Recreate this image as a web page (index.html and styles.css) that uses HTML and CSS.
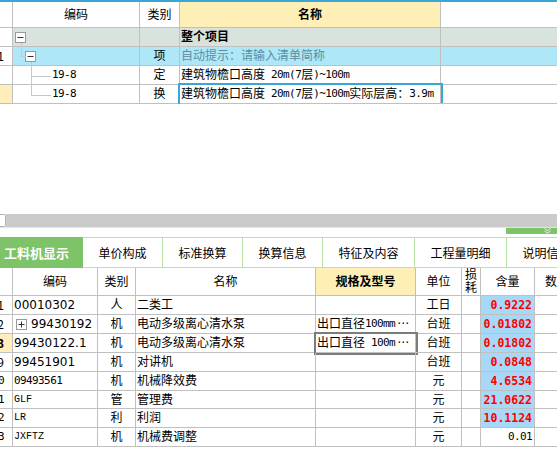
FILE: index.html
```html
<!DOCTYPE html>
<html lang="zh-CN">
<head>
<meta charset="utf-8">
<title>工料机显示</title>
<link rel="stylesheet" href="styles.css">
</head>
<body>
<div class="app">
  <div class="topline"></div>

  <div class="grid top">
    <div class="row head">
      <div class="c n"></div>
      <div class="c ctr">编码</div>
      <div class="c ctr">类别</div>
      <div class="c ctr hl b">名称</div>
      <div class="c last"></div>
    </div>
    <div class="row gray">
      <div class="c n wh"></div>
      <div class="c tree t1"><svg class="box" width="11" height="11" viewBox="0 0 11 11"><rect x=".5" y=".5" width="10" height="10" fill="#fff" stroke="#9a9a9a"/><path d="M2.5 5.5h6" stroke="#333"/></svg></div>
      <div class="c ctr"></div>
      <div class="c b">整个项目</div>
      <div class="c last"></div>
    </div>
    <div class="row blue">
      <div class="c n wh">1</div>
      <div class="c tree t2"><svg class="box" width="11" height="11" viewBox="0 0 11 11"><rect x=".5" y=".5" width="10" height="10" fill="#fff" stroke="#9a9a9a"/><path d="M2.5 5.5h6" stroke="#333"/></svg></div>
      <div class="c ctr">项</div>
      <div class="c hint">自动提示：请输入清单简称</div>
      <div class="c last"></div>
    </div>
    <div class="row">
      <div class="c n"></div>
      <div class="c tree t3"><span class="sm">19-8</span></div>
      <div class="c ctr">定</div>
      <div class="c">建筑物檐口高度<span class="sm"> 20m(7</span>层<span class="sm">)~100m</span></div>
      <div class="c last"></div>
    </div>
    <div class="row">
      <div class="c n cur"></div>
      <div class="c tree t4"><span class="sm">19-8</span></div>
      <div class="c ctr">换</div>
      <div class="c sel-blue">建筑物檐口高度<span class="sm"> 20m(7</span>层<span class="sm">)~100m</span>实际层高：<span class="sm">3.9m</span></div>
      <div class="c last"></div>
    </div>
  </div>

  <div class="spacer"></div>

  <div class="hscroll">
    <div class="thumb"></div>
    <div class="track"></div>
  </div>

  <div class="striprow">
    <div class="strip">
      <svg width="7" height="6" viewBox="0 0 7 6"><path d="M0.5 0.5l3 2.2 3-2.2M0.5 3l3 2.2 3-2.2" fill="none" stroke="#e6f4de" stroke-width="1"/></svg>
    </div>
  </div>

  <div class="tabs">
    <div class="tab active w83">工料机显示</div>
    <div class="tab w80">单价构成</div>
    <div class="tab w80">标准换算</div>
    <div class="tab w80">换算信息</div>
    <div class="tab w92">特征及内容</div>
    <div class="tab w92">工程量明细</div>
    <div class="tab w80">说明信息</div>
  </div>

  <div class="grid low">
    <div class="row head">
      <div class="c n"></div>
      <div class="c ctr">编码</div>
      <div class="c ctr">类别</div>
      <div class="c ctr">名称</div>
      <div class="c ctr hl b">规格及型号</div>
      <div class="c ctr">单位</div>
      <div class="c ctr stack"><span>损</span><span>耗</span></div>
      <div class="c ctr">含量</div>
      <div class="c ctr">数量</div>
    </div>
    <div class="row">
      <div class="c n">1</div>
      <div class="c">00010302</div>
      <div class="c ctr">人</div>
      <div class="c">二类工</div>
      <div class="c"></div>
      <div class="c ctr">工日</div>
      <div class="c"></div>
      <div class="c num">0.9222</div>
      <div class="c"></div>
    </div>
    <div class="row">
      <div class="c n">2</div>
      <div class="c"><svg class="box plus" width="11" height="11" viewBox="0 0 11 11"><rect x=".5" y=".5" width="10" height="10" fill="#fff" stroke="#9a9a9a"/><path d="M2.5 5.5h6M5.5 2.5v6" stroke="#333"/></svg>99430192</div>
      <div class="c ctr">机</div>
      <div class="c">电动多级离心清水泵</div>
      <div class="c">出口直径<span class="sm">100mm</span><span class="dots">···</span></div>
      <div class="c ctr">台班</div>
      <div class="c"></div>
      <div class="c num">0.01802</div>
      <div class="c"></div>
    </div>
    <div class="row">
      <div class="c n cur b">3</div>
      <div class="c">99430122.1</div>
      <div class="c ctr">机</div>
      <div class="c">电动多级离心清水泵</div>
      <div class="c sel-gray">出口直径<span class="sm"> 100m</span><span class="dots">···</span></div>
      <div class="c ctr">台班</div>
      <div class="c"></div>
      <div class="c num">0.01802</div>
      <div class="c"></div>
    </div>
    <div class="row">
      <div class="c n">9</div>
      <div class="c">99451901</div>
      <div class="c ctr">机</div>
      <div class="c">对讲机</div>
      <div class="c"></div>
      <div class="c ctr">台班</div>
      <div class="c"></div>
      <div class="c num">0.0848</div>
      <div class="c"></div>
    </div>
    <div class="row">
      <div class="c n sm">0</div>
      <div class="c"><span class="sm">09493561</span></div>
      <div class="c ctr">机</div>
      <div class="c">机械降效费</div>
      <div class="c"></div>
      <div class="c ctr">元</div>
      <div class="c"></div>
      <div class="c num">4.6534</div>
      <div class="c"></div>
    </div>
    <div class="row r18">
      <div class="c n sm">1</div>
      <div class="c"><span class="sf">GLF</span></div>
      <div class="c ctr">管</div>
      <div class="c">管理费</div>
      <div class="c"></div>
      <div class="c ctr">元</div>
      <div class="c"></div>
      <div class="c num">21.0622</div>
      <div class="c"></div>
    </div>
    <div class="row">
      <div class="c n sm">2</div>
      <div class="c"><span class="sf">LR</span></div>
      <div class="c ctr">利</div>
      <div class="c">利润</div>
      <div class="c"></div>
      <div class="c ctr">元</div>
      <div class="c"></div>
      <div class="c num">10.1124</div>
      <div class="c"></div>
    </div>
    <div class="row">
      <div class="c n sm">3</div>
      <div class="c"><span class="sf">JXFTZ</span></div>
      <div class="c ctr">机</div>
      <div class="c">机械费调整</div>
      <div class="c"></div>
      <div class="c ctr">元</div>
      <div class="c"></div>
      <div class="c numplain"><span class="sm">0.01</span></div>
      <div class="c"></div>
    </div>
  </div>
</div>
</body>
</html>
```

FILE: styles.css
```css
* { box-sizing: border-box; margin: 0; padding: 0; }
html, body { width: 557px; height: 451px; overflow: hidden; background: #fff; }
body {
  font-family: "DejaVu Sans", "Noto Sans CJK SC", sans-serif;
  font-size: 12px;
  color: #000;
}
.app { width: 557px; overflow: hidden; }

.topline { height: 2px; background: #3aa6d6; }

.grid { overflow: hidden; }
.row { display: grid; height: 19px; }
.top .row { grid-template-columns: 13px 127px 40px 261px 116px; }
.top .row.head { height: 26px; }
.low .row { grid-template-columns: 13px 85px 38px 180px 100px 46px 19px 54px 45px; width: 580px; }
.low .row.head { height: 28px; }
.low .row.r18 { height: 18px; }

.c {
  border-right: 1px solid #c0c0c0;
  border-bottom: 1px solid #c0c0c0;
  display: flex;
  align-items: center;
  white-space: nowrap;
  overflow: hidden;
  padding-left: 1px;
  line-height: 14px;
}
.c.last { border-right: none; }
.ctr { justify-content: center; padding-left: 0; }
.b { font-weight: 700; }
.hl { background: #feefb6; }
.n { justify-content: flex-end; padding: 0 8px 0 0; font-family: "Noto Sans CJK SC", sans-serif; }
.cur { background: #ffeebb; }
.wh { background: #fff !important; }

.gray .c { background: #d9e3de; }
.blue .c { background: #aee8f8; }
.hint { color: #5f8d9d; }

.sm {
  font-family: "DejaVu Sans Mono", monospace;
  font-size: 11px;
  letter-spacing: -0.6px;
  white-space: pre;
}
.sf {
  font-family: "Liberation Mono", monospace;
  font-size: 10px;
}
.dots {
  font-family: "DejaVu Sans Mono", monospace;
  font-size: 10px;
  letter-spacing: -2px;
  margin-left: 1px;
}

/* tree */
.tree { position: relative; overflow: visible; }
.t1 { padding-left: 2px; }
.t2 { padding-left: 12px; }
.t3, .t4 { padding-left: 39px; }
.box { display: block; flex: none; }
.t2::before {
  content: "";
  position: absolute;
  left: 8px; top: -4px;
  width: 4px; height: 13px;
  border-left: 1px solid #c8c8c8;
  border-bottom: 1px solid #c8c8c8;
}
.t3::before {
  content: "";
  position: absolute;
  left: 18px; top: -4px;
  width: 19px; height: 14px;
  border-left: 1px solid #c8c8c8;
  border-bottom: 1px solid #c8c8c8;
}
.t4::before {
  content: "";
  position: absolute;
  left: 18px; top: -19px;
  width: 19px; height: 29px;
  border-left: 1px solid #c8c8c8;
  border-bottom: 1px solid #c8c8c8;
}

.sel-blue { outline: 2px solid #3aa6d6; overflow: visible; }
.sel-gray { outline: 2px solid #7c7c7c; overflow: visible; }

.spacer { height: 110px; }

.hscroll { display: flex; height: 14px; border-bottom: 1px solid #e4e4e4; }
.thumb {
  width: 6px;
  background: #fff;
  border: 1px solid #b4b4b4;
  border-left: none;
  border-radius: 0 2px 2px 0;
}
.track { flex: 1; background: #cbcbcb; }

.striprow { height: 6px; display: flex; justify-content: flex-end; margin-bottom: 3px; }
.strip {
  width: 51px;
  background: #7dc367;
  display: flex;
  justify-content: flex-end;
  align-items: center;
  padding-right: 6px;
}
.strip svg { display: block; }

.tabs { display: flex; height: 31px; width: 587px; }
.tab {
  flex: none;
  display: flex;
  align-items: center;
  justify-content: center;
  font-family: "Noto Sans CJK SC", sans-serif;
  border-top: 1px solid #b7e3a5;
  border-bottom: 1px solid #b7e3a5;
  border-right: 1px solid #b7e3a5;
}
.tab.active {
  background: #7dc367;
  border-color: #7dc367;
  color: #fff;
  font-weight: 700;
  font-size: 13px;
  justify-content: flex-start;
  padding-left: 4px;
}
.w83 { width: 83px; }
.w80 { width: 80px; }
.w92 { width: 92px; }

.stack { flex-direction: column; line-height: 13px; justify-content: center; }

.num {
  justify-content: flex-end;
  padding: 0 2px 0 0;
  background: #a7d8f7;
  color: #ff0000;
  font-family: "DejaVu Sans Mono", monospace;
  font-weight: 700;
  font-size: 11.5px;
}
.numplain { justify-content: flex-end; padding: 0 2px 0 0; }
.plus { margin: 0 4px 0 2px; }
```
